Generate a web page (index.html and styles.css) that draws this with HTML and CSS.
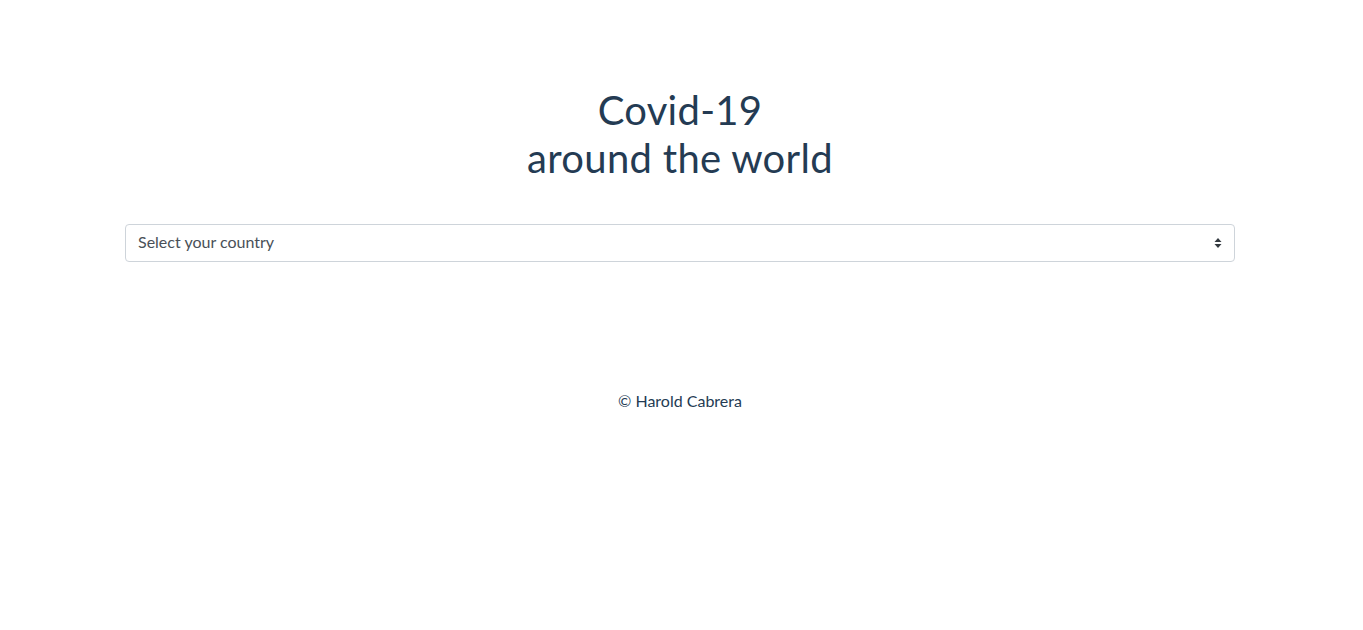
FILE: index.html
```html
<!DOCTYPE html>
<html>
<head>
<meta charset="utf-8">
<link rel="stylesheet" href="styles.css">
</head>
<body>
<main class="page">
  <h1 class="title">Covid-19<br>around the world</h1>
  <div class="select">
    <span class="select-text">Select your country</span>
    <svg class="select-arrow" width="8" height="12" viewBox="0 0 8 12"><path d="M4 1 L7.5 5 H0.5 Z M4 11 L7.5 7 H0.5 Z" fill="#343a40"/></svg>
  </div>
  <footer class="footer">© Harold Cabrera</footer>
</main>
</body>
</html>
```
FILE: styles.css
```css
html, body { margin: 0; padding: 0; background: #fff; }
body { font-family: Lato, "Open Sans", sans-serif; color: #243b53; }
.page { width: 1110px; margin: 0 auto; padding-right: 3px; display: flex; flex-direction: column; align-items: stretch; }
.title { margin: 86px 0 0; font-weight: 400; font-size: 40px; line-height: 48px; letter-spacing: 0.3px; text-align: center; color: #243b53; }
.select { margin-top: 42px; height: 38px; box-sizing: border-box; border: 1px solid #ced4da; border-radius: 4px; display: flex; align-items: center; justify-content: space-between; padding: 0 12px 0 12px; }
.select-text { font-size: 16px; line-height: 20px; margin-bottom: 3px; color: #495057; }
.select-arrow { display: block; }
.footer { margin-top: 127px; text-align: center; font-size: 16px; line-height: 24px; color: #243b53; }
```
